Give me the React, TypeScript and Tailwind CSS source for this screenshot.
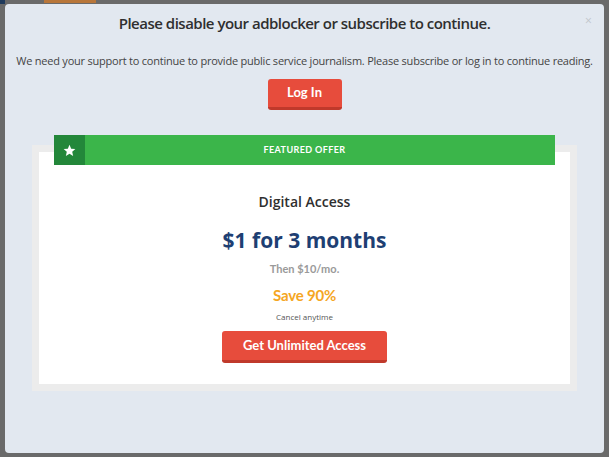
import React from "react";

export default function App() {
  return (
    <div className="w-[609px] h-[457px] bg-[#6a6a6a] overflow-hidden relative" style={{ fontFamily: '"Open Sans", sans-serif' }}>
      <div className="absolute left-0 top-0 w-[5px] h-[4px] bg-[#1f3a5c]" />
      <div className="absolute left-[44px] top-0 w-[52px] h-[3px] bg-[#b8763a]" />
      <div className="ml-[5px] mt-[4px] w-[599px] h-[449px] rounded-[4px] bg-[#e2e8f0] relative flex flex-col items-center">
        <span className="absolute left-[580px] top-[9px] text-[12px] leading-[16px] text-[#c1c5cb]">×</span>
        <h1 className="mt-[8px] text-[15px] font-semibold text-[#2f2f2f] leading-[22px] tracking-[-0.5px]">
          Please disable your adblocker or subscribe to continue.
        </h1>
        <p className="mt-[19px] text-[11px] text-[#444] leading-[16px] tracking-[-0.22px]">
          We need your support to continue to provide public service journalism. Please subscribe or log in to continue reading.
        </p>
        <button
          className="mt-[10px] w-[74px] h-[31px] rounded-[3px] bg-[#e74c3c] border-b-[3px] border-[#c0392b] text-white text-[13px] font-bold"
          style={{ fontFamily: 'Lato, sans-serif' }}
        >
          Log In
        </button>
        <div className="mt-[25px] w-[545px] flex flex-col">
          <div className="relative z-10 mx-[22px] h-[30px] bg-[#3bb54a] flex items-center">
            <div className="w-[31px] h-[30px] bg-[#23873a] flex items-center justify-center">
              <svg width="13" height="13" viewBox="0 0 24 24" fill="#fff">
                <path d="M12 1.5l3.1 7.1 7.7.7-5.8 5.1 1.7 7.6L12 18l-6.7 4 1.7-7.6L1.2 9.3l7.7-.7z" />
              </svg>
            </div>
            <span
              className="flex-1 text-center pr-[31px] text-white text-[9px] font-bold tracking-[0.4px]"
              style={{ fontFamily: 'Lato, sans-serif' }}
            >
              FEATURED OFFER
            </span>
          </div>
          <div className="-mt-[20px] bg-[#ececec] p-[7px]">
            <div className="bg-white h-[232px] flex flex-col items-center">
              <div className="mt-[40px] text-[14px] font-semibold text-[#2f2f2f] leading-[20px]">Digital Access</div>
              <div className="mt-[14px] text-[21px] font-bold text-[#1e3f73] leading-[28px]">$1 for 3 months</div>
              <div className="mt-[8px] text-[11px] font-bold text-[#9a9a9a] leading-[14px]" style={{ fontFamily: 'Lato, sans-serif' }}>Then $10/mo.</div>
              <div className="mt-[9px] text-[15px] font-bold text-[#f5a623] leading-[20px] tracking-[-0.2px]" style={{ fontFamily: 'Lato, sans-serif' }}>Save 90%</div>
              <div className="mt-[6px] text-[8px] text-[#555] leading-[12px]">Cancel anytime</div>
              <button
                className="mt-[8px] w-[165px] h-[32px] rounded-[3px] bg-[#e74c3c] border-b-[3px] border-[#c0392b] text-white text-[13px] font-bold"
                style={{ fontFamily: 'Lato, sans-serif' }}
              >
                Get Unlimited Access
              </button>
            </div>
          </div>
        </div>
      </div>
    </div>
  );
}
